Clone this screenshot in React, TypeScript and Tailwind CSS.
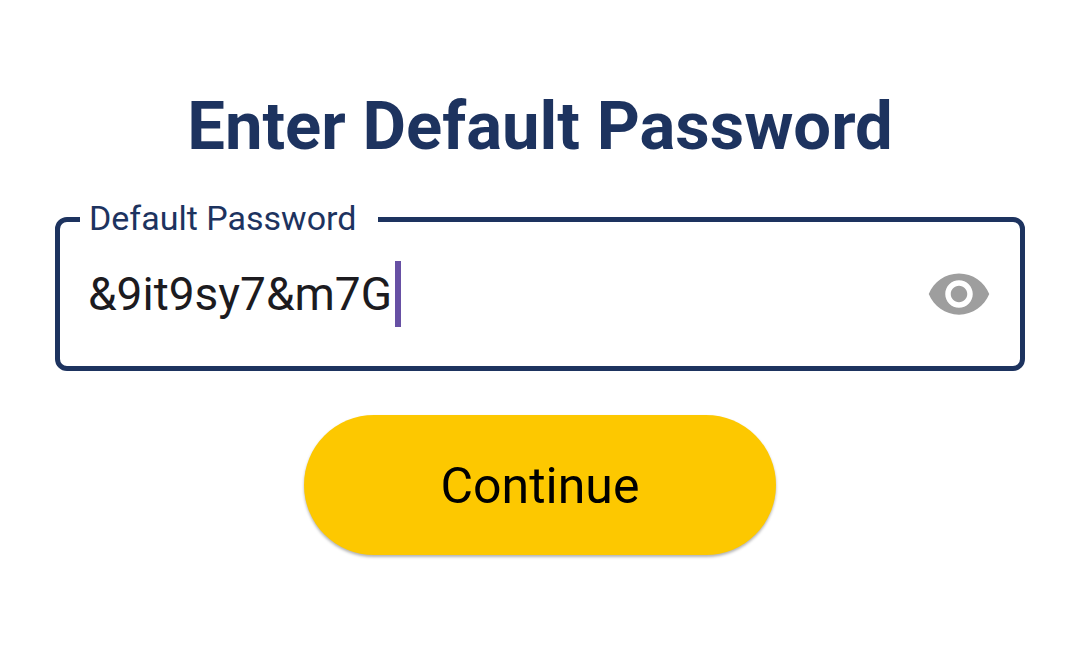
import { useState } from "react";

export default function App() {
  const [password, setPassword] = useState("&9it9sy7&m7G");
  const [visible, setVisible] = useState(true);

  return (
    <main className="min-h-screen bg-white px-[55px] pt-[86px] pb-20 font-[Roboto,sans-serif]">
      <form
        className="flex flex-col items-center"
        onSubmit={(event) => event.preventDefault()}
      >
        <h1 className="text-center text-[67px] leading-[80px] font-bold text-[#1d335f]">
          Enter Default Password
        </h1>

        <fieldset className="mt-[33px] w-full min-w-0 rounded-xl border-[5px] border-[#1d335f] pr-7 pb-[39px] pl-7">
          <legend className="-ml-2 pr-[22px] pb-[2px] pl-[9px] text-[34px] leading-[38px] text-[#1d335f]">
            <label htmlFor="default-password">Default Password</label>
          </legend>
          <div className="mt-[22px] flex items-center">
            <div className="flex min-w-0 flex-1 items-center">
              <input
                id="default-password"
                type={visible ? "text" : "password"}
                value={password}
                onChange={(event) => setPassword(event.target.value)}
                autoComplete="off"
                spellCheck={false}
                className="h-[66px] max-w-full min-w-0 bg-transparent pr-[3px] text-[46px] text-[#1c1b1f] caret-transparent outline-none [field-sizing:content]"
              />
              <span aria-hidden="true" className="h-[66px] w-[6px] shrink-0 bg-[#6750a4]" />
            </div>
            <button
              type="button"
              aria-label="Toggle password visibility"
              onClick={() => setVisible(!visible)}
              className="shrink-0"
            >
              <svg viewBox="0 0 24 24" className="size-[66px]" fill="#9e9e9e" aria-hidden="true">
                <path d="M12 4.5C7 4.5 2.73 7.61 1 12c1.73 4.39 6 7.5 11 7.5s9.27-3.11 11-7.5c-1.73-4.39-6-7.5-11-7.5zM12 17c-2.76 0-5-2.24-5-5s2.24-5 5-5 5 2.24 5 5-2.24 5-5 5zm0-8c-1.66 0-3 1.34-3 3s1.34 3 3 3 3-1.34 3-3-1.34-3-3-3z" />
              </svg>
            </button>
          </div>
        </fieldset>

        <button
          type="submit"
          className="mt-11 rounded-full bg-[#fdc800] px-[137px] pt-[41px] pb-[39px] text-[50px] leading-[60px] text-black shadow-[0_2px_3px_rgba(0,0,0,0.3)]"
        >
          Continue
        </button>
      </form>
    </main>
  );
}
